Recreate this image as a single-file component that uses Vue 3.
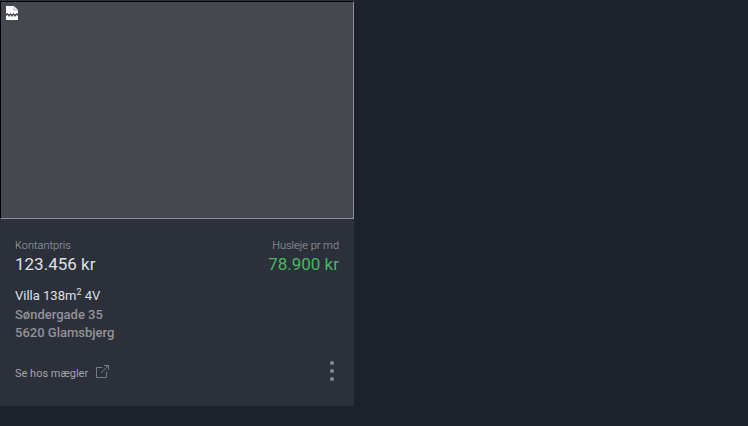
<script setup>
const dots = [0, 1, 2]
</script>

<template>
  <main class="page">
    <article class="card">
      <div class="photo">
        <svg class="broken" width="12" height="14" viewBox="0 0 12 14">
          <path d="M0 0H8L12 4V8L10.5 7L9 8.5L7.5 7L6 8.5L4.5 7L3 8.5L1.5 7L0 8Z" fill="#fff" />
          <path d="M8 0V4H12" fill="none" stroke="#aaacb0" />
          <path d="M0 10L1.5 9L3 11L4.5 9L6 11L7.5 9L9 11L10.5 9L12 10V14H0Z" fill="#fff" />
        </svg>
      </div>
      <div class="body">
        <div class="prices">
          <div>
            <div class="label">Kontantpris</div>
            <div class="price">123.456 kr</div>
          </div>
          <div class="rent">
            <div class="label">Husleje pr md</div>
            <div class="price green">78.900 kr</div>
          </div>
        </div>
        <div class="type">Villa 138m<sup>2</sup> 4V</div>
        <div class="address">Søndergade 35<br />5620 Glamsbjerg</div>
        <div class="footer">
          <a class="link">Se hos mægler
            <svg width="13" height="13" viewBox="0 0 13 13" fill="none" stroke="#777a81">
              <path d="M6.5 2.5H.5V12.5H10.5V6.5M8 .5H12.5V5M12.5 .5L5 8" />
            </svg>
          </a>
          <div class="menu"><i v-for="d in dots" :key="d"></i></div>
        </div>
      </div>
    </article>
  </main>
</template>

<style>
body { background: #1d212b; }
</style>
<style scoped>
.page { font-family: Roboto, sans-serif; color: #dfe0e2; height: 426px; background: #1d212b; }
.card { width: 354px; height: 406px; padding-top: 1px; background: #2c303a; box-sizing: border-box; border-radius: 0 0 2px 2px; }
.photo { height: 218px; box-sizing: border-box; background: #464850; border: 1px solid; border-color: #000 #8e9095 #8e9095 #000; padding: 4px 5px; }
.broken { display: block; }
.body { padding: 20px 15px 0; }
.prices { display: flex; justify-content: space-between; }
.rent { text-align: right; }
.label { font-size: 11px; font-weight: 300; line-height: 14px; color: #a2a4a9; }
.price { font-size: 17px; line-height: 22px; }
.green { color: #46b862; }
.type { margin-top: 12px; font-size: 13px; line-height: 18px; }
.type sup { font-size: 9px; line-height: 0; }
.address { margin-top: 1px; font-size: 13px; font-weight: 500; line-height: 18px; color: #919399; }
.footer { display: flex; justify-content: space-between; align-items: center; height: 24px; margin-top: 17px; }
.link { display: flex; align-items: center; gap: 8px; padding-top: 5px; font-size: 11px; color: #a2a4a9; }
.link svg { margin-top: -5px; }
.menu { display: flex; flex-direction: column; gap: 4px; padding-right: 5px; }
.menu i { width: 4px; height: 4px; border-radius: 50%; background: #858990; }
</style>
